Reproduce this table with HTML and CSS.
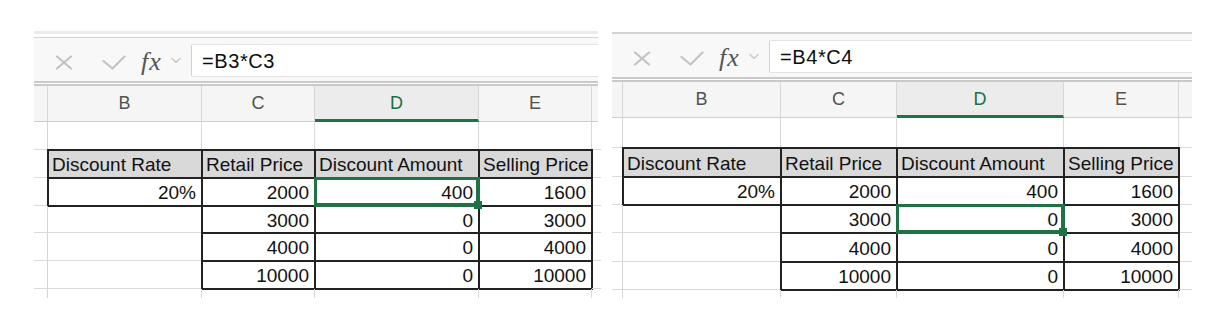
FILE: index.html
```html
<!DOCTYPE html>
<html lang="en">
<head>
<meta charset="utf-8">
<title>Excel discount formula</title>
<link rel="stylesheet" href="styles.css">
</head>
<body>
<div class="shots">
  <section class="panel panel--left">
    <div class="fbar">
      <div class="fbar-tools">
        <svg class="ico ico-x" width="18" height="15" viewBox="0 0 18 15"><path d="M2 1.5L16 13.5M16 1.5L2 13.5" /></svg>
        <svg class="ico ico-check" width="24" height="15" viewBox="0 0 24 15"><path d="M1.5 6L10.5 13.5L22.5 1.5" /></svg>
        <span class="fx">fx</span>
        <svg class="ico ico-chev" width="10" height="7" viewBox="0 0 10 7"><path d="M1 1.5L5 5.5L9 1.5" /></svg>
      </div>
      <div class="fbar-input">=B3*C3</div>
    </div>
    <div class="grid">
      <div class="ch"></div><div class="ch">B</div><div class="ch">C</div><div class="ch ch--on">D</div><div class="ch">E</div><div class="ch rest"></div>

      <div class="c strip"></div><div class="c"></div><div class="c"></div><div class="c"></div><div class="c"></div><div class="c rest"></div>

      <div class="c strip"></div><div class="c th t">Discount Rate</div><div class="c th t">Retail Price</div><div class="c th t">Discount Amount</div><div class="c th t">Selling Price</div><div class="c rest"></div>

      <div class="c strip"></div><div class="c num t">20%</div><div class="c num t">2000</div><div class="c num t sel">400</div><div class="c num t">1600</div><div class="c rest"></div>

      <div class="c strip"></div><div class="c"></div><div class="c num t">3000</div><div class="c num t">0</div><div class="c num t">3000</div><div class="c rest"></div>

      <div class="c strip"></div><div class="c"></div><div class="c num t">4000</div><div class="c num t">0</div><div class="c num t">4000</div><div class="c rest"></div>

      <div class="c strip"></div><div class="c"></div><div class="c num t">10000</div><div class="c num t">0</div><div class="c num t">10000</div><div class="c rest"></div>

      <div class="c strip end"></div><div class="c end"></div><div class="c end"></div><div class="c end"></div><div class="c end"></div><div class="c rest end"></div>
    </div>
  </section>

  <section class="panel panel--right">
    <div class="fbar">
      <div class="fbar-tools">
        <svg class="ico ico-x" width="18" height="15" viewBox="0 0 18 15"><path d="M2 1.5L16 13.5M16 1.5L2 13.5" /></svg>
        <svg class="ico ico-check" width="24" height="15" viewBox="0 0 24 15"><path d="M1.5 6L10.5 13.5L22.5 1.5" /></svg>
        <span class="fx">fx</span>
        <svg class="ico ico-chev" width="10" height="7" viewBox="0 0 10 7"><path d="M1 1.5L5 5.5L9 1.5" /></svg>
      </div>
      <div class="fbar-input">=B4*C4</div>
    </div>
    <div class="grid">
      <div class="ch"></div><div class="ch">B</div><div class="ch">C</div><div class="ch ch--on">D</div><div class="ch">E</div><div class="ch rest"></div>

      <div class="c strip"></div><div class="c"></div><div class="c"></div><div class="c"></div><div class="c"></div><div class="c rest"></div>

      <div class="c strip"></div><div class="c th t">Discount Rate</div><div class="c th t">Retail Price</div><div class="c th t">Discount Amount</div><div class="c th t">Selling Price</div><div class="c rest"></div>

      <div class="c strip"></div><div class="c num t">20%</div><div class="c num t">2000</div><div class="c num t">400</div><div class="c num t">1600</div><div class="c rest"></div>

      <div class="c strip"></div><div class="c"></div><div class="c num t">3000</div><div class="c num t sel">0</div><div class="c num t">3000</div><div class="c rest"></div>

      <div class="c strip"></div><div class="c"></div><div class="c num t">4000</div><div class="c num t">0</div><div class="c num t">4000</div><div class="c rest"></div>

      <div class="c strip"></div><div class="c"></div><div class="c num t">10000</div><div class="c num t">0</div><div class="c num t">10000</div><div class="c rest"></div>

      <div class="c strip end"></div><div class="c end"></div><div class="c end"></div><div class="c end"></div><div class="c end"></div><div class="c rest end"></div>
    </div>
  </section>
</div>
</body>
</html>
```

FILE: styles.css
```css
* { box-sizing: border-box; }

body {
  margin: 0;
  background: #ffffff;
  font-family: "Liberation Sans", Arial, sans-serif;
  color: #111111;
}

.shots {
  display: flex;
  align-items: flex-start;
  gap: 14px;
  padding: 31px 0 0 34px;
}

.panel {
  display: flex;
  flex-direction: column;
  background: #ffffff;
}

.panel--left {
  width: 564px;
  border-top: 3px solid #ececec;
  padding-top: 3px;
  --cols: 14px 154px 113px 164px 113px 6px;
  --rows: 36px 28px 28px 28px 27px 28px 28px 9px;
}
.panel--left .fbar { border-top: 1px solid #d3d3d3; }

.panel--right {
  width: 580px;
  margin-top: 1px;
  --cols: 11px 158px 116px 167px 115px 13px;
  --rows: 36px 30px 29px 28px 28px 29px 28px 8px;
}
.panel--right .fbar { border-top: 2px solid #d3d3d3; }

/* formula bar */
.fbar {
  display: flex;
  align-items: flex-start;
  background: #f8f8f8;
  border-bottom: 2px solid #c9c9c9;
  margin-bottom: 1px;
}

.fbar-tools {
  width: 157px;
  height: 43px;
  flex: none;
  display: flex;
  align-items: center;
  padding: 6px 0 0 21px;
}

.ico { display: block; flex: none; }
.ico path { fill: none; stroke-linecap: round; stroke-linejoin: round; }
.ico-x path { stroke: #c3c3c3; stroke-width: 2.2; }
.ico-check { margin-left: 29px; }
.ico-check path { stroke: #c3c3c3; stroke-width: 2.2; }
.ico-chev { margin-left: 9px; margin-top: -4px; }
.ico-chev path { stroke: #c6c6c6; stroke-width: 1.3; }

.fx {
  margin-left: 15px;
  font-family: "Liberation Serif", "DejaVu Serif", serif;
  font-style: italic;
  font-size: 26px;
  letter-spacing: 1px;
  color: #555555;
  line-height: 1;
  margin-top: -2px;
}

.fbar-input {
  flex: 1;
  height: 33px;
  margin-top: 6px;
  background: #ffffff;
  border: 1px solid #e3e3e3;
  border-left-color: #d2d2d2;
  border-right: none;
  border-radius: 2px 0 0 2px;
  display: flex;
  align-items: center;
  padding: 1px 0 0 10px;
  font-size: 20px;
  letter-spacing: 0.6px;
  color: #0d0d0d;
}

/* sheet grid */
.grid {
  display: grid;
  grid-template-columns: var(--cols);
  grid-template-rows: var(--rows);
  border-top: 2px solid #c9c9c9;
}

.ch {
  background: #f5f5f5;
  border-right: 1px solid #d6d6d6;
  border-bottom: 1px solid #cdcdcd;
  display: flex;
  align-items: center;
  justify-content: center;
  font-size: 18px;
  color: #525252;
  min-width: 0;
}
.ch--on {
  background: #ececec;
  color: #1d6e42;
  border-bottom: 3px solid #1f7244;
  padding-top: 2px;
}

.c {
  border-right: 1px solid #dadada;
  border-bottom: 1px solid #dadada;
  display: flex;
  align-items: center;
  padding: 2px 5px 0 4px;
  font-size: 19px;
  line-height: 1;
  white-space: nowrap;
  min-width: 0;
  color: #111111;
}

.strip { border-right-color: #d4d4d4; }
.rest { border-right: none; }
.end { border-bottom: none; }

.th { background: #d9d9d9; }
.num { justify-content: flex-end; }

.t {
  outline: 2px solid #222222;
  outline-offset: -1px;
}

.sel {
  position: relative;
  z-index: 2;
  outline-color: #1f7244;
  box-shadow: inset 0 0 0 2px #1f7244;
}
.sel::after {
  content: "";
  position: absolute;
  right: -4px;
  bottom: -4px;
  width: 8px;
  height: 8px;
  background: #1f7244;
}
```
